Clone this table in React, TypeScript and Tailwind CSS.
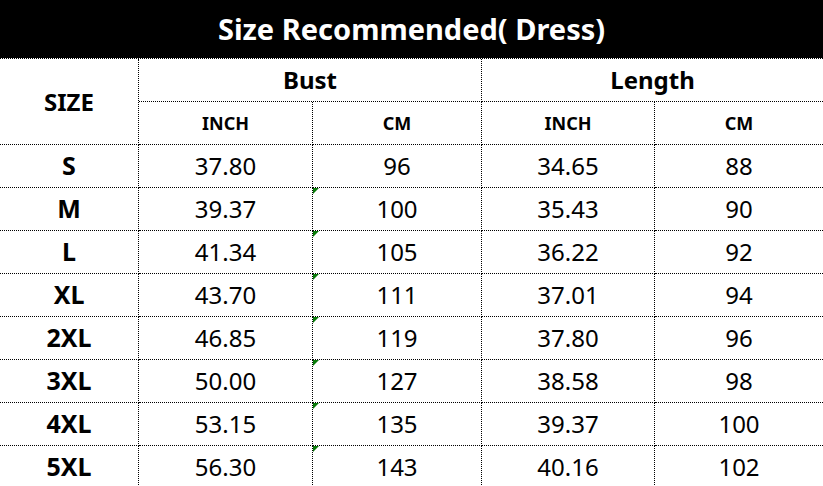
const ROWS = [
  { size: 'S',   bustIn: '37.80', bustCm: '96',  lenIn: '34.65', lenCm: '88'  },
  { size: 'M',   bustIn: '39.37', bustCm: '100', lenIn: '35.43', lenCm: '90'  },
  { size: 'L',   bustIn: '41.34', bustCm: '105', lenIn: '36.22', lenCm: '92'  },
  { size: 'XL',  bustIn: '43.70', bustCm: '111', lenIn: '37.01', lenCm: '94'  },
  { size: '2XL', bustIn: '46.85', bustCm: '119', lenIn: '37.80', lenCm: '96'  },
  { size: '3XL', bustIn: '50.00', bustCm: '127', lenIn: '38.58', lenCm: '98'  },
  { size: '4XL', bustIn: '53.15', bustCm: '135', lenIn: '39.37', lenCm: '100' },
  { size: '5XL', bustIn: '56.30', bustCm: '143', lenIn: '40.16', lenCm: '102' },
]

const cell = 'flex items-center justify-center border-b border-dotted border-black'

// green "number stored as text" corner marker, like the spreadsheet shows
function TextMarker() {
  return (
    <span className="absolute left-0 top-0 h-0 w-0 border-r-[6px] border-t-[6px] border-r-transparent border-t-[#0a7a0a]" />
  )
}

export default function App() {
  return (
    <div
      className="w-[823px] h-[486px] overflow-hidden bg-white text-black"
      style={{ fontFamily: '"Noto Sans", "Open Sans", sans-serif' }}
    >
      {/* Title bar */}
      <div className="flex h-[58px] items-center justify-center bg-black text-[29px] font-bold text-white">
        Size Recommended( Dress)
      </div>

      <div className="grid grid-cols-[139px_174px_169px_173px_168px] border-t border-dotted border-black">
        {/* Header */}
        <div className={`${cell} row-span-2 h-[86px] border-r text-[24px] font-bold`}>SIZE</div>
        <div className={`${cell} col-span-2 h-[43px] border-r text-[24px] font-bold`}>Bust</div>
        <div className={`${cell} col-span-2 h-[43px] text-[24px] font-bold`}>Length</div>
        <div className={`${cell} h-[43px] border-r text-[18px] font-bold`}>INCH</div>
        <div className={`${cell} h-[43px] border-r text-[18px] font-bold`}>CM</div>
        <div className={`${cell} h-[43px] border-r text-[18px] font-bold`}>INCH</div>
        <div className={`${cell} h-[43px] text-[18px] font-bold`}>CM</div>

        {/* Rows */}
        {ROWS.map((r, i) => (
          <div key={r.size} className="contents">
            <div className={`${cell} h-[43px] border-r text-[25px] font-bold`}>{r.size}</div>
            <div className={`${cell} h-[43px] border-r text-[24px]`}>{r.bustIn}</div>
            <div className={`${cell} relative h-[43px] border-r text-[24px]`}>
              {i > 0 && <TextMarker />}
              {r.bustCm}
            </div>
            <div className={`${cell} h-[43px] border-r text-[24px]`}>{r.lenIn}</div>
            <div className={`${cell} h-[43px] text-[24px]`}>{r.lenCm}</div>
          </div>
        ))}
      </div>
    </div>
  )
}
